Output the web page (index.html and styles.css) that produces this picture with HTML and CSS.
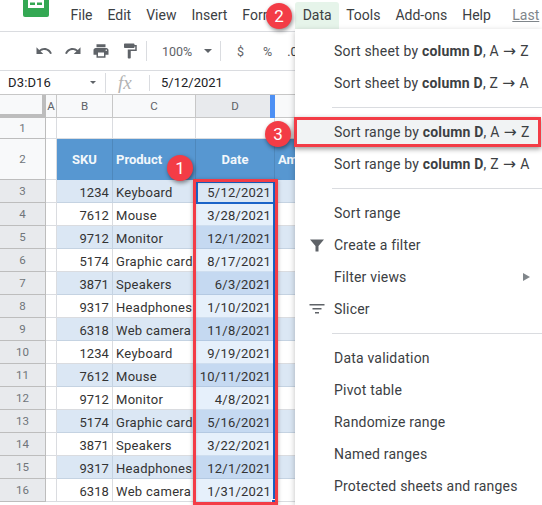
FILE: index.html
```html
<!DOCTYPE html>
<html lang="en">
<head>
<meta charset="utf-8">
<title>Sort range</title>
<link rel="stylesheet" href="styles.css">
</head>
<body>
<div class="app">
  <header class="menubar">
    <svg class="logo" width="26" height="18" viewBox="0 0 26 18"><path d="M0 0H26V15a2 2 0 0 1-2 2H2a2 2 0 0 1-2-2Z" fill="#34a853"/><path d="M5 0H21V8H5Z" fill="#fff"/><path d="M7 2.500H12V5H7ZM14 2.500H19V5H14Z" fill="#34a853"/></svg>
    <nav class="menus">
      <span>File</span><span>Edit</span><span>View</span><span>Insert</span><span>Format</span><span class="data">Data</span><span>Tools</span><span>Add-ons</span><span>Help</span><span class="last">Last</span>
    </nav>
  </header>
  <div class="toolbar">
    <svg class="ico undo" width="18" height="18" viewBox="0 0 24 24"><path d="M12.500 8c-2.650 0-5.050.99-6.900 2.600L2 7v9h9l-3.620-3.620c1.390-1.160 3.160-1.880 5.120-1.880 3.540 0 6.550 2.310 7.600 5.500l2.370-.78C21.080 11.030 17.150 8 12.500 8z" fill="#5f6368"/></svg>
    <svg class="ico" width="18" height="18" viewBox="0 0 24 24"><path d="M18.400 10.600C16.550 8.990 14.150 8 11.500 8c-4.650 0-8.580 3.030-9.960 7.220L3.900 16c1.050-3.190 4.050-5.500 7.600-5.500 1.950 0 3.730.72 5.120 1.880L13 16h9V7l-3.600 3.600z" fill="#5f6368"/></svg>
    <svg class="ico" width="18" height="18" viewBox="0 0 24 24"><path d="M19 8H5c-1.660 0-3 1.340-3 3v6h4v4h12v-4h4v-6c0-1.660-1.340-3-3-3zm-3 11H8v-5h8v5zm3-7c-.55 0-1-.45-1-1s.45-1 1-1 1 .45 1 1-.45 1-1 1zm-1-9H6v4h12V3z" fill="#5f6368"/></svg>
    <svg class="ico" width="18" height="18" viewBox="0 0 24 24"><path d="M18 4V3c0-.55-.45-1-1-1H5c-.55 0-1 .45-1 1v4c0 .55.45 1 1 1h12c.55 0 1-.45 1-1V6h1v4H9v11c0 .55.45 1 1 1h2c.55 0 1-.45 1-1v-9h8V4h-3z" fill="#5f6368"/></svg>
    <i class="vsep first"></i>
    <span class="zoomval">100%</span>
    <i class="caret"></i>
    <i class="vsep second"></i>
    <span class="tool dollar">$</span>
    <span class="tool pct">%</span>
    <span class="tool dec">.0</span>
  </div>
  <div class="formula">
    <span class="namebox">D3:D16</span>
    <i class="caret small"></i>
    <i class="vsep f1"></i>
    <span class="fx">fx</span>
    <i class="vsep f2"></i>
    <span class="fval">5/12/2021</span>
  </div>
  <div class="sheet">
    <div class="corner"></div><div class="ch">A</div><div class="ch">B</div><div class="ch">C</div><div class="ch on">D</div><div class="ch"></div>
    <div class="rh r1">1</div><div class="c"></div><div class="c"></div><div class="c"></div><div class="c"></div><div class="c"></div>
    <div class="rh r2">2</div><div class="c"></div><div class="h">SKU</div><div class="h pr">Product</div><div class="h">Date</div><div class="h am">Am</div>

    <div class="rh">3</div><div class="c"></div><div class="c n s">1234</div><div class="c s">Keyboard</div><div class="c n d a">5/12/2021</div><div class="c s"></div>
    <div class="rh">4</div><div class="c"></div><div class="c n">7612</div><div class="c">Mouse</div><div class="c n d e">3/28/2021</div><div class="c"></div>
    <div class="rh">5</div><div class="c"></div><div class="c n s">9712</div><div class="c s">Monitor</div><div class="c n d o">12/1/2021</div><div class="c s"></div>
    <div class="rh">6</div><div class="c"></div><div class="c n">5174</div><div class="c">Graphic card</div><div class="c n d e">8/17/2021</div><div class="c"></div>
    <div class="rh">7</div><div class="c"></div><div class="c n s">3871</div><div class="c s">Speakers</div><div class="c n d o">6/3/2021</div><div class="c s"></div>
    <div class="rh">8</div><div class="c"></div><div class="c n">9317</div><div class="c">Headphones</div><div class="c n d e">1/10/2021</div><div class="c"></div>
    <div class="rh">9</div><div class="c"></div><div class="c n s">6318</div><div class="c s">Web camera</div><div class="c n d o">11/8/2021</div><div class="c s"></div>
    <div class="rh">10</div><div class="c"></div><div class="c n">1234</div><div class="c">Keyboard</div><div class="c n d e">9/19/2021</div><div class="c"></div>
    <div class="rh">11</div><div class="c"></div><div class="c n s">7612</div><div class="c s">Mouse</div><div class="c n d o">10/11/2021</div><div class="c s"></div>
    <div class="rh">12</div><div class="c"></div><div class="c n">9712</div><div class="c">Monitor</div><div class="c n d e">4/8/2021</div><div class="c"></div>
    <div class="rh">13</div><div class="c"></div><div class="c n s">5174</div><div class="c s">Graphic card</div><div class="c n d o">5/16/2021</div><div class="c s"></div>
    <div class="rh">14</div><div class="c"></div><div class="c n">3871</div><div class="c">Speakers</div><div class="c n d e">3/22/2021</div><div class="c"></div>
    <div class="rh">15</div><div class="c"></div><div class="c n s">9317</div><div class="c s">Headphones</div><div class="c n d o">12/1/2021</div><div class="c s"></div>
    <div class="rh">16</div><div class="c"></div><div class="c n">6318</div><div class="c">Web camera</div><div class="c n d e">1/31/2021</div><div class="c"></div>
  </div>

  <i class="colbar"></i>
  <div class="selbox"><i class="active"></i><i class="handle"></i></div>
  <div class="redcol"></div>

  <div class="menu">
    <div class="item">Sort sheet by&nbsp;<b>column D</b>, A <span class="ar">→</span> Z</div>
    <div class="item">Sort sheet by&nbsp;<b>column D</b>, Z <span class="ar">→</span> A</div>
    <hr>
    <div class="item hit">Sort range by&nbsp;<b>column D</b>, A <span class="ar">→</span> Z</div>
    <div class="item">Sort range by&nbsp;<b>column D</b>, Z <span class="ar">→</span> A</div>
    <hr>
    <div class="item">Sort range</div>
    <div class="item"><svg class="mi" width="16" height="16" viewBox="0 0 16 16"><path d="M1 2.500H15L9.500 9V14.500H6.500V9Z" fill="#5f6368"/></svg>Create a filter</div>
    <div class="item">Filter views<i class="arrow"></i></div>
    <div class="item"><svg class="mi" width="16" height="16" viewBox="0 0 16 16"><path d="M.5 3H15.500V4.500H.5ZM3.500 7H12.500V8.500H3.500ZM6 11H10V12.500H6Z" fill="#5f6368"/></svg>Slicer</div>
    <hr>
    <div class="item">Data validation</div>
    <div class="item">Pivot table</div>
    <div class="item">Randomize range</div>
    <div class="item">Named ranges</div>
    <div class="item">Protected sheets and ranges</div>
  </div>

  <span class="badge b1">1</span>
  <span class="badge b2">2</span>
  <span class="badge b3">3</span>
</div>
</body>
</html>
```
FILE: styles.css
```css
* { box-sizing: border-box; }
html, body { margin: 0; padding: 0; background: #fff; }
.app {
  position: relative;
  width: 542px;
  height: 505px;
  overflow: hidden;
  font-family: Roboto, "Liberation Sans", sans-serif;
  color: #3c4043;
}
i { display: block; font-style: normal; }

.menubar {
  height: 32px;
  display: flex;
  align-items: flex-start;
  padding-left: 23px;
  border-bottom: 1px solid #dadce0;
}
.logo { flex: none; }
.menus {
  display: flex;
  margin-left: 14px;
  font-size: 14px;
  line-height: 16px;
  color: #3c4043;
  padding-top: 7px;
}
.menus span { margin: 0 7.500px; white-space: nowrap; }
.menus .data {
  background: #e6f4ea;
  margin: -5px 0 0 0;
  padding: 5px 7px 8px 8px;
  height: 27px;
  border-radius: 3px 3px 0 0;
}
.menus .last { margin-left: 14px; color: #80868b; text-decoration: underline; }

.toolbar {
  height: 39px;
  display: flex;
  align-items: center;
  padding-left: 35px;
  border-bottom: 1px solid #dadce0;
}
.ico { flex: none; margin-right: 10.500px; }
.vsep { flex: none; width: 1px; height: 20px; background: #dadce0; }
.vsep.first { margin: 0 0 0 -3px; }
.zoomval { font-size: 12.500px; margin-left: 15px; color: #5f6368; width: 42px; }
.caret { flex: none; width: 0; height: 0; border: 4px solid transparent; border-top: 4px solid #5f6368; border-bottom: 0; }
.vsep.second { margin-left: 8px; }
.tool { font-size: 12.500px; color: #5f6368; flex: none; }
.dollar { margin-left: 16px; }
.pct { margin-left: 19px; }
.dec { margin-left: 15px; color: #3c4043; }

.formula {
  height: 24px;
  display: flex;
  align-items: center;
  padding-left: 8px;
  border-bottom: 1px solid #c7c7c7;
  font-size: 13px;
  color: #202124;
}
.namebox { width: 79px; letter-spacing: .15px; }
.caret.small { margin-left: 3px; border-width: 3px 3px 0; }
.vsep.f1 { margin-left: 9px; }
.fx { font-family: "Liberation Serif", serif; font-style: italic; font-size: 19px; color: #b3b3b3; margin-left: 12px; width: 31px; }
.vsep.f2 { height: 16px; }
.fval { margin-left: 11px; }

.sheet {
  display: grid;
  grid-template-columns: 46px 11px 56px 83px 79px 267px;
  grid-template-rows: 23px 21px 41px repeat(14, 23px);
  font-size: 13px;
  color: #333;
}
.corner { background: #f8f9fa; border-right: 4px solid #bdbdbd; border-bottom: 4px solid #bdbdbd; }
.ch {
  background: #f8f9fa;
  border-right: 1px solid #c7c7c7;
  border-bottom: 1px solid #c7c7c7;
  font-size: 11.500px;
  color: #5f6368;
  display: flex;
  align-items: center;
  justify-content: center;
}
.ch.on { background: #e8eaed; }
.rh {
  background: #e8eaed;
  border-right: 1px solid #bdbdbd;
  border-bottom: 1px solid #bdbdbd;
  font-size: 11.500px;
  color: #70757a;
  display: flex;
  align-items: center;
  justify-content: center;
}
.rh.r1, .rh.r2 { background: #f8f9fa; }
.c {
  border-right: 1px solid #dadce0;
  border-bottom: 1px solid #dadce0;
  display: flex;
  align-items: center;
  padding: 2px 3px 0;
  white-space: nowrap;
  overflow: hidden;
  letter-spacing: .3px;
}
.n { justify-content: flex-end; letter-spacing: .1px; }
.s { background: #dbe7f4; border-color: #c5d3e2; }
.h {
  background: #5797d1;
  border-right: 1px solid #4e88bc;
  color: #f3f7fb;
  font-weight: 700;
  font-size: 13px;
  display: flex;
  align-items: center;
  justify-content: center;
  white-space: nowrap;
  overflow: hidden;
}
.pr { justify-content: flex-start; padding-left: 3px; }
.am { justify-content: flex-start; padding-left: 3px; border-right: 0; }
.d { border-right: 0; padding-right: 4px; letter-spacing: .2px; }
.a { background: #dbe7f4; }
.e { background: #e6f0fb; border-color: #cfdeef; }
.o { background: #c5d9f1; border-color: #b4c9e2; }

.colbar { position: absolute; left: 270px; top: 95px; width: 5px; height: 23px; background: #4d90f4; }
.selbox {
  position: absolute;
  left: 196px;
  top: 180px;
  width: 79px;
  height: 322px;
  border-right: 2px solid #1a63c8;
}
.active { position: absolute; left: 0; right: -2px; top: 1px; height: 23px; border: 2px solid #1a63c8; }
.handle { position: absolute; right: -3px; bottom: -2px; background: #1a63c8; border: 1px solid #fff; box-sizing: content-box; width: 3px; height: 3px; }
.redcol {
  position: absolute;
  left: 193px;
  top: 179px;
  width: 85px;
  height: 326px;
  border: 3px solid #f33c46;
  box-shadow: 0 1px 4px rgba(0,0,0,.3), inset 0 1px 3px rgba(0,0,0,.15);
}

.menu {
  position: absolute;
  left: 295px;
  top: 29px;
  width: 247px;
  height: 476px;
  background: #fff;
  padding-top: 6px;
  box-shadow: 0 2px 6px rgba(0,0,0,.25);
  font-size: 14px;
  color: #3c4043;
}
.item {
  position: relative;
  height: 32px;
  display: flex;
  align-items: center;
  padding-left: 39px;
  white-space: pre;
  letter-spacing: .2px;
}
.item b { font-weight: 700; color: #3c4043; }
.ar { font-family: "DejaVu Sans", sans-serif; font-size: 15.500px; line-height: 16px; letter-spacing: 0; margin: 0 .5px; }
.menu hr { border: 0; border-top: 1px solid #dadce0; margin: 8px 0 8px 37px; height: 0; }
.hit::before {
  content: "";
  position: absolute;
  left: -1px;
  right: 1px;
  top: 1px;
  bottom: 1px;
  background: #f1f3f4;
  border: 3px solid #f33c46;
  box-shadow: 0 2px 5px rgba(0,0,0,.4);
  z-index: -1;
}
.hit { z-index: 0; }
.mi { position: absolute; left: 14px; top: 8px; }
.arrow { position: absolute; right: 12px; top: 12px; width: 0; height: 0; border-left: 7px solid #80868b; border-top: 4px solid transparent; border-bottom: 4px solid transparent; }

.badge {
  position: absolute;
  width: 26px;
  height: 26px;
  border-radius: 50%;
  background: #f33c46;
  color: #fff;
  font-size: 17px;
  display: flex;
  align-items: center;
  justify-content: center;
  box-shadow: 1px 2px 4px rgba(0,0,0,.45);
}
.b1 { left: 167px; top: 155px; }
.b2 { left: 266px; top: 3px; }
.b3 { left: 265px; top: 121px; }
```
